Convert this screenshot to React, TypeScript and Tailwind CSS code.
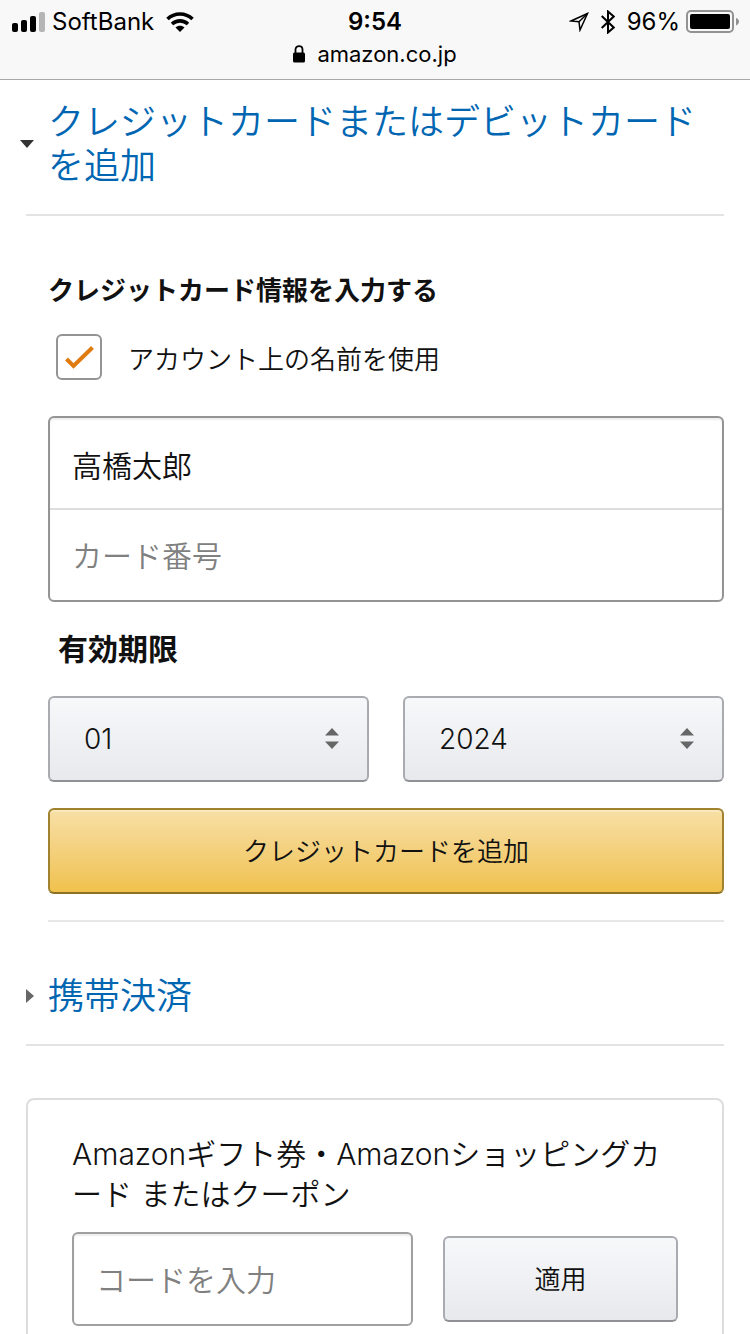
import { useState } from "react";

const months = ["01", "02", "03", "04", "05", "06", "07", "08", "09", "10", "11", "12"];
const years = ["2024", "2025", "2026", "2027", "2028", "2029", "2030"];

export default function App() {
  const [useAccountName, setUseAccountName] = useState(true);
  const [name, setName] = useState("高橋太郎");

  return (
    <div className="h-screen flex flex-col bg-white text-[#111111] font-['Inter','Noto_Sans_CJK_JP',sans-serif]">
      <StatusBar />

      <main className="flex-1 min-h-0 overflow-y-auto [scrollbar-width:none] px-[26px] pt-5 font-[350]">
        {/* Add a card */}
        <section>
          <h2 className="flex items-center border-b-2 border-[#e3e3e3] pb-[26px] text-[36px] leading-[44px]">
            <span className="w-6 shrink-0 -ml-1.5">
              <svg viewBox="0 0 14 8" className="w-3.5 h-2" fill="#333333">
                <path d="M0 0h14L7 8z" />
              </svg>
            </span>
            <a href="#card" className="flex-1 pl-1 text-[#0066b2]">
              クレジットカードまたはデビットカードを追加
            </a>
          </h2>

          <form className="ml-[22px] border-b-2 border-[#e7e7e7] pt-14 pb-[26px]" onSubmit={(e) => e.preventDefault()}>
            <h3 className="text-[26px] leading-[38px] font-bold">クレジットカード情報を入力する</h3>

            <label className="mt-6 ml-2 flex items-end gap-[26px] text-[26px] leading-10">
              <span className="grid size-[46px]">
                <input
                  type="checkbox"
                  checked={useAccountName}
                  onChange={(e) => setUseAccountName(e.target.checked)}
                  className="peer col-start-1 row-start-1 size-[46px] appearance-none rounded-md border-2 border-[#949494] bg-white"
                />
                <svg
                  viewBox="0 0 46 46"
                  className="pointer-events-none col-start-1 row-start-1 size-[46px] opacity-0 peer-checked:opacity-100"
                  fill="none"
                  stroke="#e07b12"
                  strokeWidth="4"
                >
                  <path d="M10.500 25l7 7L36.500 13.500" />
                </svg>
              </span>
              アカウント上の名前を使用
            </label>

            <div className="mt-9 flex flex-col rounded-md border-2 border-[#949494] divide-y-2 divide-[#dddddd] shadow-[inset_0_2px_2px_#eeeeee] text-[30px]">
              <input
                aria-label="名前"
                value={name}
                onChange={(e) => setName(e.target.value)}
                className="h-[92px] px-[22px] pt-0.5 bg-transparent outline-none"
              />
              <input
                aria-label="カード番号"
                placeholder="カード番号"
                className="h-[90px] px-[22px] pt-0.5 bg-transparent outline-none placeholder:text-[#808080]"
              />
            </div>

            <h4 className="mt-6 ml-2.5 text-[30px] leading-[46px] font-bold">有効期限</h4>

            <div className="mt-6 grid grid-cols-2 gap-[34px]">
              <DateSelect label="月" options={months} />
              <DateSelect label="年" options={years} />
            </div>

            <button
              type="submit"
              className="mt-[26px] w-full h-[86px] rounded-md border-2 border-[#a0822f] border-b-[#8c7024] bg-linear-to-b from-[#f7dfa5] to-[#f0c14b] text-[26px] shadow-[inset_0_2px_0_#fae8bd]"
            >
              クレジットカードを追加
            </button>
          </form>
        </section>

        {/* Carrier billing */}
        <h2 className="flex items-center border-b-2 border-[#e3e3e3] pt-[52px] pb-[26px] text-[36px] leading-[44px]">
          <svg viewBox="0 0 8 14" className="w-2 h-3.5" fill="#666666">
            <path d="M0 0v14l8-7z" />
          </svg>
          <a href="#carrier" className="pl-3.5 text-[#0066b2]">
            携帯決済
          </a>
        </h2>

        {/* Gift card / coupon */}
        <section className="mt-[52px] rounded-lg border-2 border-[#dddddd] px-11 pt-[34px] pb-11">
          <label htmlFor="code" className="block text-[30px] leading-10">
            Amazonギフト券・Amazonショッピングカード またはクーポン
          </label>
          <div className="mt-[18px] flex items-center gap-[30px]">
            <input
              id="code"
              placeholder="コードを入力"
              className="min-w-0 flex-1 h-[94px] rounded-md border-2 border-[#a0a0a0] px-[22px] pt-0.5 text-[30px] outline-none shadow-[inset_0_2px_2px_#eeeeee] placeholder:text-[#808080]"
            />
            <button
              type="button"
              className="w-[235px] h-[86px] rounded-md border-2 border-[#a9abb0] border-b-[#8f9196] bg-linear-to-b from-[#f7f8fa] to-[#e7e9ec] text-[26px]"
            >
              適用
            </button>
          </div>
        </section>
      </main>
    </div>
  );
}

function DateSelect({ label, options }: { label: string; options: string[] }) {
  return (
    <div className="grid items-center">
      <select
        aria-label={label}
        className="col-start-1 row-start-1 w-full h-[86px] appearance-none rounded-md border-2 border-[#a9abb0] border-b-[#8f9196] bg-linear-to-b from-[#f7f8fa] to-[#e7e9ec] pl-[34px] text-[28px]"
      >
        {options.map((o) => (
          <option key={o}>{o}</option>
        ))}
      </select>
      <svg
        viewBox="0 0 14 22"
        className="pointer-events-none col-start-1 row-start-1 justify-self-end mr-[30px] w-3.5 h-[22px]"
        fill="#666666"
      >
        <path d="M0 7.500L7 0l7 7.500zM0 13.500L7 21l7-7.500z" />
      </svg>
    </div>
  );
}

function StatusBar() {
  return (
    <header className="shrink-0 border-b border-[#a8a8a8] bg-[#f8f8f8] h-20 pt-1 text-black">
      <div className="grid grid-cols-[1fr_auto_1fr] items-center h-8 px-3 text-[24px]">
        <div className="flex items-center">
          <svg viewBox="0 0 34 20" className="w-[34px] h-5">
            <rect x="0" y="11" width="6" height="9" rx="2" />
            <rect x="9" y="8" width="6" height="12" rx="2" />
            <rect x="18" y="4" width="6" height="16" rx="2" />
            <rect x="27" y="0" width="6" height="20" rx="2" fill="#b5b5b5" />
          </svg>
          <span className="ml-1.5">SoftBank</span>
          <svg viewBox="0 0 28 20" className="ml-3 w-7 h-5" fill="none" stroke="black" strokeWidth="3.600">
            <path d="M1.500 7C8.500 .300 19.500 .300 26.500 7" />
            <path d="M6 12c4.600-4.200 11.400-4.200 16 0" />
            <path d="M14 20l-4.500-4.500c2.500-2.300 6.500-2.300 9 0z" fill="black" stroke="none" />
          </svg>
        </div>
        <span className="font-semibold">9:54</span>
        <div className="flex items-center justify-end">
          <svg viewBox="0 0 20 20" className="w-5 h-5" fill="none" stroke="black" strokeWidth="1.500">
            <path d="M18.500 1.500L2 9l8 .800L11 18z" />
            <path d="M18.500 1.500L10 9.800" />
          </svg>
          <svg viewBox="0 0 14 24" className="ml-3 w-3.5 h-6" fill="none" stroke="black" strokeWidth="2">
            <path d="M.700 6l12 11.500L7 22.500v-21l5.700 5L.700 18" />
          </svg>
          <span className="ml-3">96%</span>
          <svg viewBox="0 0 54 24" className="ml-1.5 -mr-0.5 w-[54px] h-6">
            <rect x="1" y="1" width="46" height="21" rx="4" fill="none" stroke="#929292" strokeWidth="2" />
            <rect x="4" y="4" width="40" height="15" rx="2" />
            <path d="M50 8c4 1 4 6 0 7.500z" fill="#929292" />
          </svg>
        </div>
      </div>
      <div className="flex items-center justify-center h-9 gap-3 text-[22px]">
        <svg viewBox="0 0 12 18" className="w-3 h-[18px]">
          <rect x="0" y="7.500" width="12" height="10" rx="1.500" />
          <path d="M2.500 8V4.500C2.500 0 9.500 0 9.500 4.500V8" fill="none" stroke="black" strokeWidth="1.800" />
        </svg>
        amazon.co.jp
      </div>
    </header>
  );
}
